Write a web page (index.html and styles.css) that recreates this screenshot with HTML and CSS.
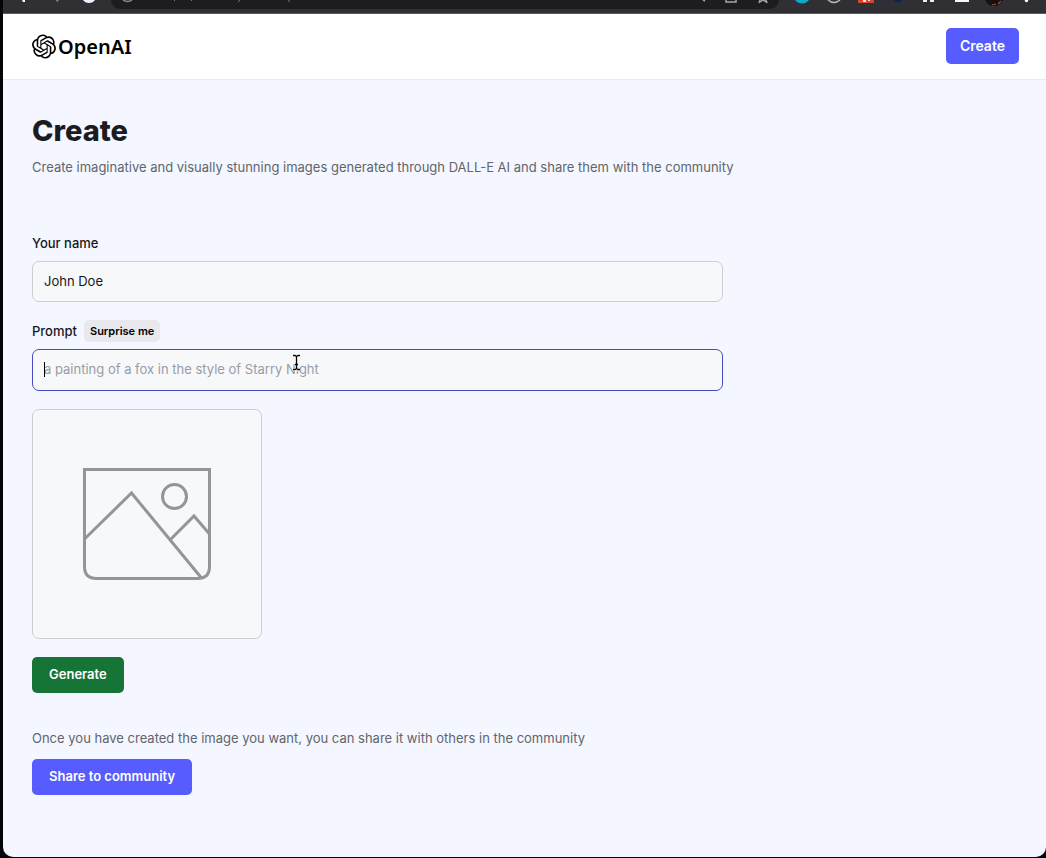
FILE: index.html
```html
<!DOCTYPE html>
<html lang="en">
<head>
<meta charset="utf-8">
<title>Create</title>
<link rel="stylesheet" href="styles.css">
</head>
<body>
<div class="window">
  <div class="toolbar" aria-hidden="true">
    <svg class="nav-icons" width="108" height="13" viewBox="3 0 108 13">
      <path d="M22 0h3v2h-2z" fill="#fff"/>
      <path d="M56 0h3l-2 2z" fill="#8b8a90"/>
      <path d="M83 0h12q-2 3-6 3t-6-3z" fill="#eef3fb"/>
    </svg>
    <div class="address">
      <svg width="180" height="9" viewBox="112 0 180 9">
        <path d="M124 0q2 1.500 4.500 1.500t4.500-1.500" fill="none" stroke="#8b8a90" stroke-width="1.500"/>
        <path d="M176 0l-1 1M193 0l-1 1M241 0l-2 2M290 0v2" stroke="#77777c"/>
      </svg>
      <svg width="80" height="9" viewBox="698 0 80 9">
        <path d="M702 0l2 1M725 0v2h10v-2M758 3l1-3M759 2l3-2 3 2M765 0l1 3" fill="none" stroke="#a5a4a9" stroke-width="1.500"/>
      </svg>
    </div>
    <svg class="extensions" width="256" height="13" viewBox="790 0 256 13">
      <path d="M795 0h14q-3 3.500-7 3.500t-7-3.500z" fill="#12a8c8"/>
      <path d="M828 0q3 2.500 6 2.500t6-2.500" fill="none" stroke="#b9b8bd" stroke-width="1.500"/>
      <path d="M858 0h16v3h-16z" fill="#d8432f"/>
      <path d="M863 0h3v2h-3zM868 0h2v1h-2z" fill="#f4ddd8"/>
      <path d="M893 0h10l-5 3z" fill="#132350"/>
      <path d="M923 0h4v2h-4zM930 0h4v2h-4z" fill="#eceef2"/>
      <path d="M955 0h14v2h-14z" fill="#f3f6fd"/>
      <path d="M985 0h18q-3 6-9 6t-9-6z" fill="#16100f"/>
      <path d="M992 5l4-1M998 4l3-3" stroke="#a94a22" stroke-width="1.200"/>
      <circle cx="1026.500" cy="0.500" r="1.700" fill="#fff"/>
    </svg>
  </div>
  <header class="header">
    <a class="logo" href="#" aria-label="OpenAI home">
      <svg class="logo-mark" viewBox="0 0 24 24" aria-hidden="true"><path d="M22.2819 9.8211a5.9847 5.9847 0 0 0-.5157-4.9108 6.0462 6.0462 0 0 0-6.5098-2.9A6.0651 6.0651 0 0 0 4.9807 4.1818a5.9847 5.9847 0 0 0-3.9977 2.9 6.0462 6.0462 0 0 0 .7427 7.0966 5.98 5.98 0 0 0 .511 4.9107 6.051 6.051 0 0 0 6.5146 2.9001A5.9847 5.9847 0 0 0 13.2599 24a6.0557 6.0557 0 0 0 5.7718-4.2058 5.9894 5.9894 0 0 0 3.9977-2.9001 6.0557 6.0557 0 0 0-.7475-7.0729zm-9.022 12.6081a4.4755 4.4755 0 0 1-2.8764-1.0408l.1419-.0804 4.7783-2.7582a.7948.7948 0 0 0 .3927-.6813v-6.7369l2.02 1.1686a.071.071 0 0 1 .038.052v5.5826a4.504 4.504 0 0 1-4.4945 4.4944zm-9.6607-4.1254a4.4708 4.4708 0 0 1-.5346-3.0137l.142.0852 4.783 2.7582a.7712.7712 0 0 0 .7806 0l5.8428-3.3685v2.3324a.0804.0804 0 0 1-.0332.0615L9.74 19.9502a4.4992 4.4992 0 0 1-6.1408-1.6464zM2.3408 7.8956a4.485 4.485 0 0 1 2.3655-1.9728V11.6a.7664.7664 0 0 0 .3879.6765l5.8144 3.3543-2.0201 1.1685a.0757.0757 0 0 1-.071 0l-4.8303-2.7865A4.504 4.504 0 0 1 2.3408 7.872zm16.5963 3.8558L13.1038 8.364 15.1192 7.2a.0757.0757 0 0 1 .071 0l4.8303 2.7913a4.4944 4.4944 0 0 1-.6765 8.1042v-5.6772a.79.79 0 0 0-.407-.667zm2.0107-3.0231l-.142-.0852-4.7735-2.7818a.7759.7759 0 0 0-.7854 0L9.409 9.2297V6.8974a.0662.0662 0 0 1 .0284-.0615l4.8303-2.7866a4.4992 4.4992 0 0 1 6.6802 4.66zM8.3065 12.863l-2.02-1.1638a.0804.0804 0 0 1-.038-.0567V6.0742a4.4992 4.4992 0 0 1 7.3757-3.4537l-.142.0805L8.704 5.459a.7948.7948 0 0 0-.3927.6813zm1.0976-2.3654l2.602-1.4998 2.6069 1.4998v2.9994l-2.5974 1.4997-2.6067-1.4997Z"/></svg>
      <span class="logo-text">OpenAI</span>
    </a>
    <a class="create-link" href="#">Create</a>
  </header>
  <main class="main">
    <h1 class="title">Create</h1>
    <p class="text">Create imaginative and visually stunning images generated through DALL-E AI and share them with the community</p>
    <form class="form">
      <div class="field">
        <div class="label-row"><label class="label" for="name">Your name</label></div>
        <input class="input" id="name" type="text" value="John Doe">
      </div>
      <div class="field">
        <div class="label-row prompt-row">
          <label class="label" for="prompt">Prompt</label>
          <button class="surprise" type="button">Surprise me</button>
        </div>
        <div class="prompt-box">
          <input class="input input-focused" id="prompt" type="text" placeholder="a painting of a fox in the style of Starry Night">
          <span class="caret"></span>
          <svg class="pointer" width="9" height="17" viewBox="0 0 9 17" aria-hidden="true">
            <path d="M1 1.500h2l1.500 1 1.500-1h2M4.500 2.500v12M1 15.500h2l1.500-1 1.500 1h2M3 10.500h3" fill="none" stroke="#fff" stroke-width="2.500"/>
            <path d="M1 1.500h2l1.500 1 1.500-1h2M4.500 2.500v12M1 15.500h2l1.500-1 1.500 1h2M3 10.500h3" fill="none" stroke="#000" stroke-width="1.300"/>
          </svg>
        </div>
      </div>
      <div class="preview">
        <svg class="preview-icon" viewBox="0 0 128 112" role="img" aria-label="Preview">
          <g fill="none" stroke="#949598" stroke-width="3">
            <path d="M1.500 1.500h125v97q0 12-12 12h-101q-12 0-12-12z"/>
            <path d="M1.500 71L48.500 25 118.500 110M87 72L111 48l15.500 18"/>
            <circle cx="91.500" cy="28.500" r="12"/>
          </g>
        </svg>
      </div>
      <button class="button generate" type="button">Generate</button>
      <div class="share">
        <p class="text">Once you have created the image you want, you can share it with others in the community</p>
        <button class="button" type="submit">Share to community</button>
      </div>
    </form>
  </main>
</div>
</body>
</html>
```
FILE: styles.css
```css
* { box-sizing: border-box; }

body {
  margin: 0;
  background: #050409;
  font-family: Inter, "Liberation Sans", sans-serif;
  font-size: 13px;
  line-height: 18px;
  color: #16171d;
}

.window {
  display: flex;
  flex-direction: column;
  min-height: calc(100vh - 1px);
  margin: 0 0 1px 3px;
  background: #f4f7ff;
  border-radius: 0 0 10px 10px;
  overflow: hidden;
}

.toolbar {
  display: flex;
  align-items: flex-start;
  height: 14px;
  background: #302f34;
  border-bottom: 1px solid #5b5a5e;
}

.toolbar svg { display: block; flex: none; }

.address {
  display: flex;
  flex: 1;
  justify-content: space-between;
  height: 9px;
  margin-right: 11px;
  background: #1c1d20;
  border-radius: 0 0 12px 12px;
}

.header {
  display: flex;
  align-items: center;
  justify-content: space-between;
  padding: 14px 27px 15px 29px;
  background: #fff;
  border-bottom: 1px solid #e6ebf4;
}

.logo {
  display: flex;
  align-items: center;
  gap: 2px;
  color: #000;
  text-decoration: none;
}

.logo-mark { width: 24px; height: 25px; }

.logo-text {
  padding-top: 2px;
  font-family: "Noto Sans", sans-serif;
  font-size: 20px;
  font-weight: 600;
  line-height: 24px;
}

.create-link {
  padding: 9px 14px;
  border-radius: 5px;
  background: #575cff;
  color: #fff;
  font-size: 14px;
  font-weight: 600;
  text-decoration: none;
}

.main { padding: 33px 29px 62px; }

.title {
  margin: 0;
  color: #1b1c22;
  font-size: 29px;
  font-weight: 800;
  line-height: 36px;
}

.text { margin: 0; color: #61656b; }

.title + .text { margin-top: 9px; }

.form {
  display: flex;
  flex-direction: column;
  align-items: flex-start;
  gap: 18px;
  max-width: 691px;
  margin-top: 58px;
}

.field { width: 100%; }

.label-row {
  display: flex;
  align-items: center;
  gap: 7px;
  margin-bottom: 9px;
}

.prompt-row { margin-bottom: 7px; }

.label { font-weight: 500; }

.surprise {
  padding: 2px 6px;
  border: 0;
  border-radius: 5px;
  background: #e9e9ed;
  color: #000;
  font: 600 11px/18px Inter, sans-serif;
}

.input {
  display: block;
  width: 100%;
  height: 41px;
  padding: 0 11px 2px;
  border: 1px solid #ccced5;
  border-radius: 7px;
  outline: 0;
  background: #f7f8fa;
  color: #16171d;
  font: inherit;
}

.input-focused { height: 42px; border-color: #484bc0; }

.input::placeholder { color: #989ca6; opacity: 1; }

.prompt-box { position: relative; }

.caret {
  position: absolute;
  top: 13px;
  left: 12px;
  width: 1px;
  height: 15px;
  background: #000;
}

.pointer {
  position: absolute;
  top: 5px;
  left: 260px;
}

.preview {
  display: flex;
  align-items: center;
  justify-content: center;
  width: 230px;
  height: 230px;
  border: 1px solid #ccced5;
  border-radius: 7px;
  background: #f7f8fa;
}

.preview-icon { width: 128px; height: 112px; }

.button {
  padding: 8px 17px 10px;
  border: 0;
  border-radius: 5px;
  background: #575cff;
  color: #fff;
  font: 600 13px/18px Inter, sans-serif;
}

.generate { background: #177437; }

.share {
  display: flex;
  flex-direction: column;
  align-items: flex-start;
  gap: 12px;
  margin-top: 18px;
}
```
